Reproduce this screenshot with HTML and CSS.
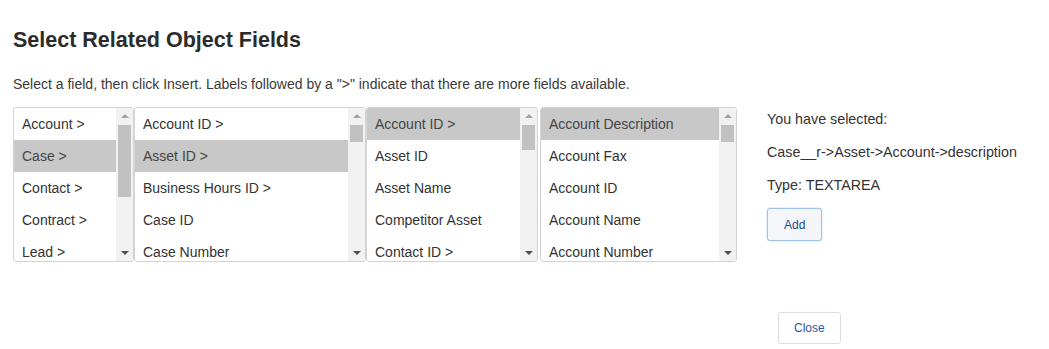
FILE: index.html
```html
<!DOCTYPE html>
<html lang="en">
<head>
  <meta charset="UTF-8">
  <title>Select Related Object Fields</title>
  <link rel="stylesheet" href="styles.css">
</head>
<body>

  <div class="dialog">
    <h2>Select Related Object Fields</h2>
    <p class="hint">Select a field, then click Insert. Labels followed by a "&gt;" indicate that there are more fields available.</p>

    <div class="picker">
      <div class="lists">
        <!-- level 1 -->
        <div class="list w1">
          <ul>
            <li>Account &gt;</li>
            <li class="sel">Case &gt;</li>
            <li>Contact &gt;</li>
            <li>Contract &gt;</li>
            <li>Lead &gt;</li>
          </ul>
          <div class="scroll">
            <span class="arrow up"></span>
            <div class="track"><div class="thumb t1"></div></div>
            <span class="arrow down"></span>
          </div>
        </div>
        <!-- level 2 -->
        <div class="list w2">
          <ul>
            <li>Account ID &gt;</li>
            <li class="sel">Asset ID &gt;</li>
            <li>Business Hours ID &gt;</li>
            <li>Case ID</li>
            <li>Case Number</li>
          </ul>
          <div class="scroll">
            <span class="arrow up"></span>
            <div class="track"><div class="thumb t2"></div></div>
            <span class="arrow down"></span>
          </div>
        </div>
        <!-- level 3 -->
        <div class="list w3">
          <ul>
            <li class="sel">Account ID &gt;</li>
            <li>Asset ID</li>
            <li>Asset Name</li>
            <li>Competitor Asset</li>
            <li>Contact ID &gt;</li>
          </ul>
          <div class="scroll">
            <span class="arrow up"></span>
            <div class="track"><div class="thumb t3"></div></div>
            <span class="arrow down"></span>
          </div>
        </div>
        <!-- level 4 -->
        <div class="list w4">
          <ul>
            <li class="sel">Account Description</li>
            <li>Account Fax</li>
            <li>Account ID</li>
            <li>Account Name</li>
            <li>Account Number</li>
          </ul>
          <div class="scroll">
            <span class="arrow up"></span>
            <div class="track"><div class="thumb t2"></div></div>
            <span class="arrow down"></span>
          </div>
        </div>
      </div>

      <div class="summary">
        <p>You have selected:</p>
        <p>Case__r-&gt;Asset-&gt;Account-&gt;description</p>
        <p>Type: TEXTAREA</p>
        <button class="btn add">Add</button>
      </div>
    </div>

    <div class="footer">
      <button class="btn">Close</button>
    </div>
  </div>

</body>
</html>
```

FILE: styles.css
```css
body { margin: 0; font-family: "Liberation Sans", Arial, sans-serif; color: #333; background: #fff; }
.dialog { padding: 0 13px; }
h2 { margin: 27px 0 0; font-size: 21.5px; line-height: 26px; font-weight: bold; color: #2b2b2b; }
.hint { margin: 23px 0 15px; font-size: 14px; line-height: 16px; color: #3a3a3a; }

.picker { display: flex; align-items: flex-start; }
.lists { display: flex; }
.list { display: flex; height: 153px; border: 1px solid #d4d4d4; border-radius: 3px; overflow: hidden; }
.list.w1 { width: 119px; }
.list.w2 { width: 230px; }
.list.w3 { width: 170px; }
.list.w4 { width: 195px; margin-left: 2px; }
.list ul { flex: 1; margin: 0; padding: 0; list-style: none; overflow: hidden; }
.list li { height: 32px; line-height: 32px; padding-left: 8px; font-size: 14px; color: #333; white-space: nowrap; }
.list li.sel { background: #c8c8c8; color: #444; }

.scroll { width: 17px; display: flex; flex-direction: column; align-items: center; background: #f1f1f1; }
.track { flex: 1; width: 100%; display: flex; justify-content: center; }
.thumb { width: 13px; background: #c1c1c1; }
.thumb.t1 { height: 72px; }
.thumb.t2 { height: 17px; }
.thumb.t3 { height: 25px; }
.arrow { width: 0; height: 0; border-left: 4px solid transparent; border-right: 4px solid transparent; margin: 6px 0; }
.arrow.up { border-bottom: 4px solid #a3a3a3; margin-bottom: 7px; }
.arrow.down { border-top: 4px solid #505050; margin-top: 6px; }

.summary { margin-left: 30px; padding-top: 4px; font-size: 14.3px; color: #333; }
.summary p { margin: 0 0 17px; line-height: 16px; }
.summary p:nth-child(3) { margin-bottom: 15px; }

.btn { font-family: "Liberation Sans", Arial, sans-serif; font-size: 12px; color: #1f5aa6; background: #fff; border: 1px solid #d8dde6; border-radius: 3px; height: 32px; padding: 0 15px; cursor: pointer; }
.btn.add { height: 33px; padding: 0 16px; background: #f4f6f9; border-color: #9ec3ea; box-shadow: 0 0 2px #b7d4f3; color: #1a4a8a; }

.footer { margin: 50px 0 0 765px; }
```
